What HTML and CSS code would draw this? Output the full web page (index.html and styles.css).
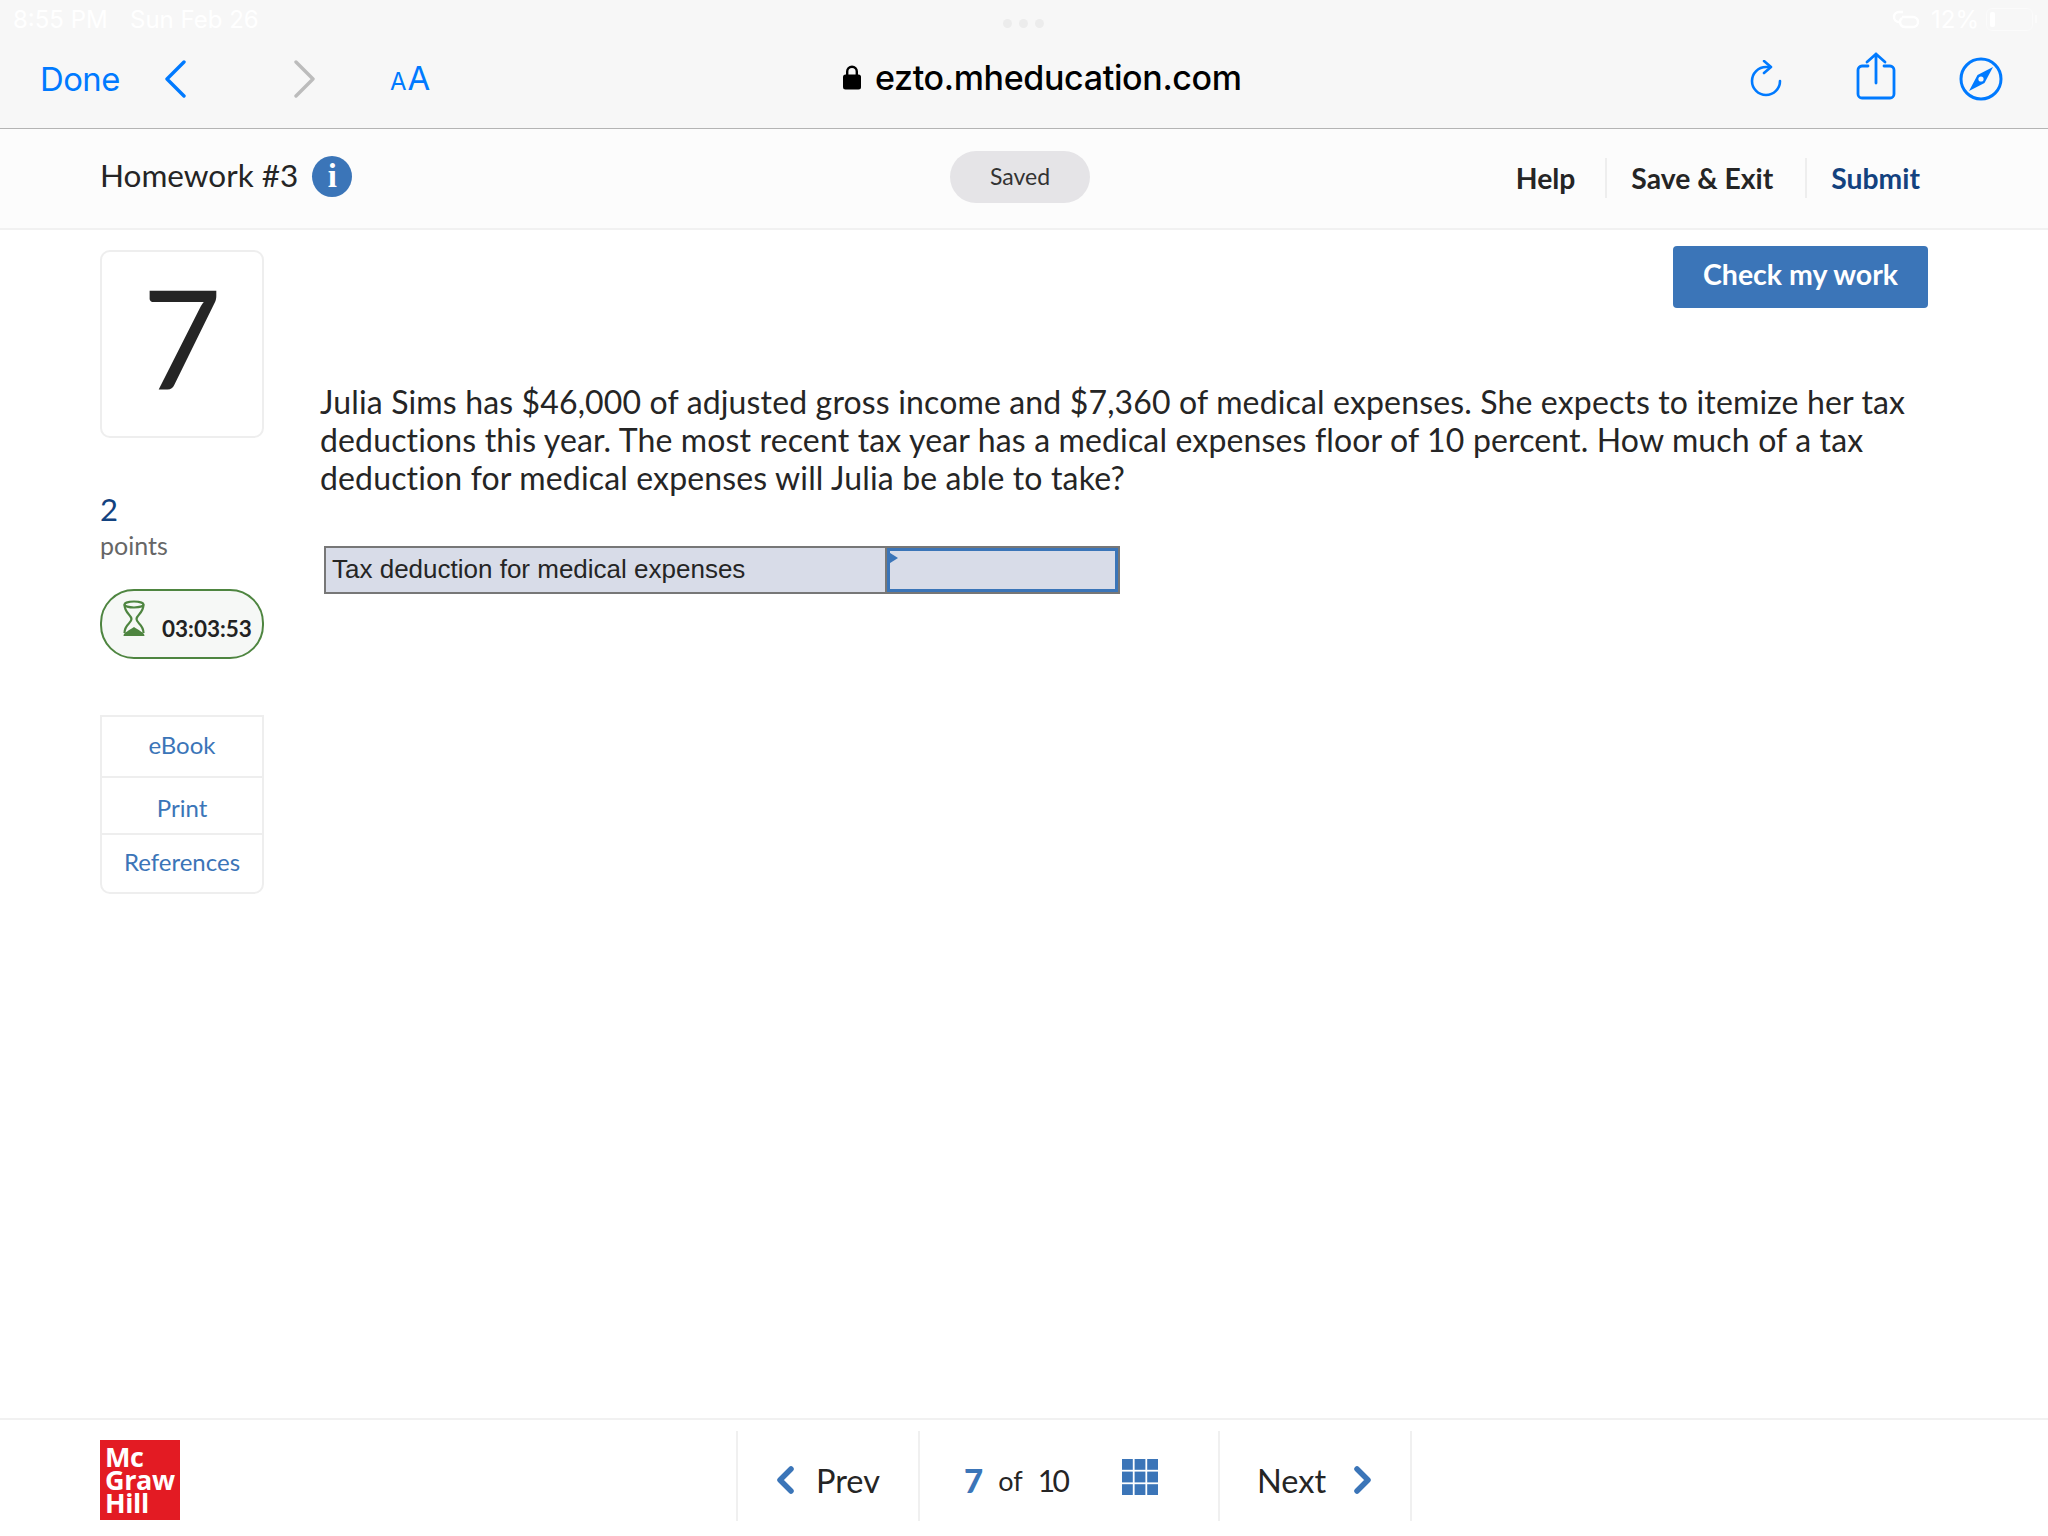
FILE: index.html
```html
<!DOCTYPE html>
<html lang="en">
<head>
<meta charset="utf-8">
<title>Homework #3</title>
<link rel="stylesheet" href="styles.css">
</head>
<body>
<div class="page">
  <div class="browser">
    <div class="status">
      <div class="status-left"><span>8:55 PM</span><span>Sun Feb 26</span></div>
      <div class="dots"><i></i><i></i><i></i></div>
      <div class="status-right">
        <svg class="link-ic" width="28" height="20" viewBox="0 0 28 20" fill="none" stroke="#fff" stroke-width="2.4"><path d="M11 3H7a5 5 0 0 0 0 10h2"/><path d="M10 8h11a5 5 0 0 1 0 10h-8a5 5 0 0 1-3-9"/></svg>
        <span>12%</span>
        <span class="battery"><b></b></span>
      </div>
    </div>
    <div class="browser-nav">
      <div class="browser-left">
        <span class="done">Done</span>
        <svg class="back" width="22" height="38" viewBox="0 0 22 38" fill="none" stroke="#007aff" stroke-width="3.4" stroke-linecap="round" stroke-linejoin="round"><path d="M20 2 3 19l17 17"/></svg>
        <svg class="forward" width="22" height="38" viewBox="0 0 22 38" fill="none" stroke="#bcbcbc" stroke-width="3.4" stroke-linecap="round" stroke-linejoin="round"><path d="M2 2l17 17L2 36"/></svg>
        <span class="aa"><small>A</small>A</span>
      </div>
      <div class="url">
        <svg width="18" height="25" viewBox="0 0 18 25"><path d="M4.2 10V6.5a4.8 4.8 0 0 1 9.6 0V10" fill="none" stroke="#000" stroke-width="2.4"/><rect y="9.5" width="18" height="15" rx="2.5" fill="#000"/></svg>
        <span>ezto.mheducation.com</span>
      </div>
      <div class="browser-right">
        <svg class="ic-reload" width="32" height="38" viewBox="0 0 32 38" fill="none" stroke="#007aff" stroke-width="2.6" stroke-linecap="round" stroke-linejoin="round"><path d="M30 21a14 14 0 1 1-14-14h4"/><path d="M14 1l7 6-7 6"/></svg>
        <svg class="ic-share" width="40" height="48" viewBox="0 0 40 48" fill="none" stroke="#007aff" stroke-width="2.8" stroke-linecap="round" stroke-linejoin="round"><path d="M12 14H6a4 4 0 0 0-4 4v24a4 4 0 0 0 4 4h28a4 4 0 0 0 4-4V18a4 4 0 0 0-4-4h-6"/><path d="M20 31V2M11 10l9-8 9 8"/></svg>
        <svg width="44" height="44" viewBox="0 0 44 44"><circle cx="22" cy="22" r="20" fill="none" stroke="#007aff" stroke-width="3"/><path d="M34 10 25.500 26 10 34l8.500-16z" fill="#007aff"/><circle cx="22" cy="22" r="2.600" fill="#f7f7f7"/></svg>
      </div>
    </div>
  </div>

  <header class="hw-head">
    <div class="hw-title">
      <span class="hw-name">Homework #3</span>
      <span class="info">i</span>
    </div>
    <div class="saved">Saved</div>
    <nav class="hw-actions">
      <a class="act act-help">Help</a>
      <a class="act act-save">Save &amp; Exit</a>
      <a class="act act-submit">Submit</a>
    </nav>
  </header>

  <main class="main">
    <aside class="side">
      <div class="qnum">7</div>
      <div class="pts">2</div>
      <div class="pts-label">points</div>
      <div class="timer">
        <svg width="24" height="38" viewBox="0 0 24 38" fill="none" stroke="#4e8540" stroke-width="2.200"><ellipse cx="12" cy="4.500" rx="9.500" ry="3"/><path d="M2.500 4.500c0 9 7 10 7 14.500s-7 5-7 14M21.500 4.500c0 9-7 10-7 14.500s7 5 7 14"/><path d="M1.500 36c0-4 7-6 10.500-9 3.500 3 10.500 5 10.500 9z" fill="#4e8540" stroke="none"/></svg>
        <span>03:03:53</span>
      </div>
      <div class="links">
        <a class="link link-e">eBook</a>
        <a class="link link-p">Print</a>
        <a class="link link-r">References</a>
      </div>
    </aside>
    <section class="content">
      <div class="check-row"><button class="check">Check my work</button></div>
      <p class="question">Julia Sims has $46,000 of adjusted gross income and $7,360 of medical expenses. She expects to itemize her tax deductions this year. The most recent tax year has a medical expenses floor of 10 percent. How much of a tax deduction for medical expenses will Julia be able to take?</p>
      <div class="answer">
        <div class="answer-label">Tax deduction for medical expenses</div>
        <div class="answer-input"></div>
      </div>
    </section>
  </main>

  <footer class="foot">
    <div class="logo"><span>Mc</span><span>Graw</span><span>Hill</span></div>
    <div class="pager">
      <div class="seg seg-prev">
        <svg width="19" height="28" viewBox="0 0 19 28" fill="none" stroke="#3b75b8" stroke-width="5.500" stroke-linecap="round" stroke-linejoin="round"><path d="M15 3 4 14l11 11"/></svg>
        <span>Prev</span>
      </div>
      <div class="seg seg-count">
        <b>7</b><span class="of">of</span><span class="total">10</span>
        <svg class="grid-ic" width="36" height="36" viewBox="0 0 36 36" fill="#3b75b8"><rect width="10.800" height="10.800"/><rect x="12.600" width="10.800" height="10.800"/><rect x="25.200" width="10.800" height="10.800"/><rect y="12.600" width="10.800" height="10.800"/><rect x="12.600" y="12.600" width="10.800" height="10.800"/><rect x="25.200" y="12.600" width="10.800" height="10.800"/><rect y="25.200" width="10.800" height="10.800"/><rect x="12.600" y="25.200" width="10.800" height="10.800"/><rect x="25.200" y="25.200" width="10.800" height="10.800"/></svg>
      </div>
      <div class="seg seg-next">
        <span>Next</span>
        <svg width="19" height="28" viewBox="0 0 19 28" fill="none" stroke="#3b75b8" stroke-width="5.500" stroke-linecap="round" stroke-linejoin="round"><path d="M4 3l11 11L4 25"/></svg>
      </div>
    </div>
  </footer>
</div>
</body>
</html>
```
FILE: styles.css
```css
* { box-sizing: border-box; }
html, body { margin: 0; padding: 0; background: #fff; }
body { font-family: "Lato", "Liberation Sans", sans-serif; color: #252525; }
.page { width: 2048px; height: 1536px; display: flex; flex-direction: column; overflow: hidden; }

.browser { height: 129px; background: #f7f7f7; border-bottom: 1px solid #b4b4b4; display: flex; flex-direction: column; }
.status { height: 40px; display: grid; grid-template-columns: 1fr auto 1fr; align-items: center; font-family: "Inter", sans-serif; font-size: 24px; color: #fff; padding: 0 15px 2px 13px; }
.status-left { display: flex; gap: 22px; }
.status-left span:first-child { width: 95px; white-space: nowrap; }
.dots { display: flex; gap: 7px; margin-top: 8px; }
.dots i { width: 9px; height: 9px; border-radius: 50%; background: #ececec; }
.status-right { justify-self: end; display: flex; align-items: center; gap: 7px; }
.link-ic { margin-right: 4px; }
.battery { position: relative; width: 47px; height: 23px; border: 1.500px solid #fbfbfb; border-radius: 6px; padding: 3px; display: flex; }
.battery b { width: 5px; background: #fff; border-radius: 2px; }
.battery::after { content: ""; position: absolute; right: -5px; top: 6px; width: 2px; height: 8px; background: #fbfbfb; }
.browser-nav { flex: 1; position: relative; display: flex; align-items: center; justify-content: space-between; padding: 0 45px 11px 40px; }
.browser-left { display: flex; align-items: center; }
.done { font-family: "Inter", sans-serif; font-size: 32.800px; color: #007aff; letter-spacing: -0.5px; width: 124px; }
.back { margin-right: 108px; }
.forward { margin-right: 74px; }
.aa { font-family: "Inter", sans-serif; color: #007aff; font-size: 33px; line-height: 1; }
.aa small { font-size: 24px; margin-right: 1px; }
.url { position: absolute; left: 843px; top: -1px; height: 77px; display: flex; align-items: center; gap: 14px; font-family: "Inter", sans-serif; font-weight: 500; font-size: 34px; color: #000; letter-spacing: -0.35px; }
.browser-right { display: flex; align-items: center; }
.ic-reload { margin-right: 74px; }
.ic-share { margin-right: 63px; margin-bottom: 5px; }

.hw-head { height: 101px; background: #fcfcfc; border-bottom: 2px solid #f1f1f1; display: flex; align-items: center; padding: 0 128px 0 100px; position: relative; }
.hw-title { display: flex; align-items: center; gap: 14px; font-size: 31.500px; width: 850px; margin-top: -5px; }
.hw-name { margin-bottom: 2px; }
.info { width: 40px; height: 41px; border-radius: 50%; background: #3b75b8; color: #fff; font-family: "Liberation Serif", serif; font-weight: 700; font-size: 33px; display: flex; align-items: center; justify-content: center; }
.saved { width: 140px; height: 52px; border-radius: 26px; background: #e5e4e7; font-size: 23px; color: #333; display: flex; align-items: center; justify-content: center; margin-top: -3px; padding-bottom: 2px; }
.hw-actions { margin-left: auto; display: flex; align-items: center; font-size: 28.300px; font-weight: 700; margin-top: -1px; }
.act { height: 40px; display: flex; align-items: center; }
.act-help { padding-right: 30px; }
.act-save { padding: 0 32px 0 24px; border-left: 2px solid #eeeeee; }
.act-submit { padding-left: 24px; border-left: 2px solid #eeeeee; color: #13427f; }

.main { flex: 1; display: flex; padding: 0 120px 0 100px; }
.side { width: 164px; margin-right: 56px; padding-top: 20px; display: flex; flex-direction: column; }
.qnum { height: 188px; border: 2px solid #eeeeee; border-radius: 10px; display: flex; align-items: center; justify-content: center; font-size: 137px; color: #252525; line-height: 1; padding-bottom: 14px; }
.pts { margin-top: 52px; font-size: 31px; line-height: 38px; color: #13427f; }
.pts-label { font-size: 25px; line-height: 34px; color: #666; }
.timer { margin-top: 27px; height: 70px; border: 2px solid #4e8540; border-radius: 34px; background: #f6f8f6; display: flex; align-items: flex-start; padding: 9px 0 0 20px; gap: 16px; font-weight: 700; font-size: 22.500px; color: #222; white-space: nowrap; }
.timer span { margin-top: 15px; }
.links { margin-top: 56px; border: 2px solid #eeeeee; border-radius: 0 0 10px 10px; display: flex; flex-direction: column; }
.link { display: flex; align-items: center; justify-content: center; font-size: 24px; color: #3b75b8; }
.link-e { height: 61px; border-bottom: 2px solid #eeeeee; padding-bottom: 4px; }
.link-p { height: 57px; border-bottom: 2px solid #eeeeee; padding-top: 3px; }
.link-r { height: 57px; padding-bottom: 5px; }

.content { flex: 1; display: flex; flex-direction: column; }
.check-row { display: flex; justify-content: flex-end; padding-top: 16px; }
.check { width: 255px; height: 62px; border: 0; border-radius: 4px; background: #3b75b8; color: #fff; font-family: inherit; font-size: 28.500px; font-weight: 700; padding: 0 0 6px; }
.question { margin: 75px 0 0; font-size: 32px; letter-spacing: 0.15px; line-height: 38px; color: #252525; }
.answer { margin: 49px 0 0 4px; width: 796px; height: 48px; border: 2px solid #777; background: #d8dce8; display: flex; }
.answer-label { width: 561px; border-right: 2px solid #777; font-family: "Liberation Sans", sans-serif; font-size: 26px; line-height: 42px; padding-left: 6px; color: #252525; }
.answer-input { flex: 1; border: 3px solid #3b75b8; position: relative; }
.answer-input::before { content: ""; position: absolute; left: -3px; top: 0; border-left: 11px solid #3b75b8; border-top: 7px solid transparent; border-bottom: 7px solid transparent; }

.foot { height: 118px; border-top: 2px solid #f1f1f1; display: flex; align-items: flex-start; padding: 11px 0 0 100px; }
.logo { margin-top: 9px; width: 80px; height: 80px; background: #e31b23; color: #fff; font-family: "Open Sans", sans-serif; font-weight: 700; font-size: 27px; line-height: 23px; letter-spacing: -0.4px; padding: 5px 0 0 5px; display: flex; flex-direction: column; }
.pager { margin-left: 556px; display: flex; height: 90px; font-size: 32.500px; }
.seg { height: 90px; display: flex; align-items: center; border-left: 2px solid #f0f0f0; padding-top: 8px; }
.seg-prev { width: 182px; padding-left: 38px; gap: 21px; }
.seg-count { width: 300px; padding-left: 44px; }
.seg-count b { color: #3b75b8; font-size: 33px; font-weight: 900; }
.seg-count .of { font-size: 27px; margin: 0 15px 0 15px; }
.total { font-size: 30px; letter-spacing: -2.500px; }
.grid-ic { margin: -7px 0 0 55px; }
.seg-next { width: 194px; padding-left: 37px; gap: 27px; border-right: 2px solid #f0f0f0; }
```
